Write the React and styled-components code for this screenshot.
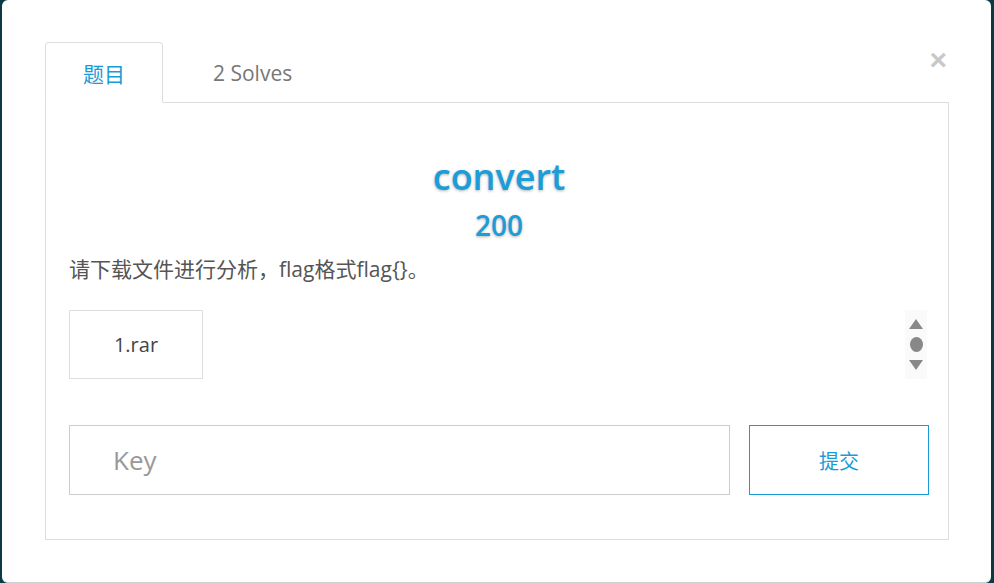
import React from 'react'
import styled, { createGlobalStyle } from 'styled-components'

const GlobalStyle = createGlobalStyle`
  html, body {
    margin: 0;
    padding: 0;
    background: #0c3a43;
    font-family: "Open Sans", "Noto Sans CJK SC", sans-serif;
  }
`

const App = () => {
    return (
        <>
            <GlobalStyle />
            <Modal>
                <TabRow>
                    <Tab active>题目</Tab>
                    <Tab>2 Solves</Tab>
                    <Close>×</Close>
                </TabRow>
                <Panel>
                    <Title>convert</Title>
                    <Score>200</Score>
                    <Desc>请下载文件进行分析，flag格式flag{'{}'}。</Desc>
                    <FileRow>
                        <FileBox>1.rar</FileBox>
                        <Scroller>
                            <Arrow up />
                            <Dot />
                            <Arrow />
                        </Scroller>
                    </FileRow>
                    <SubmitRow>
                        <KeyInput placeholder="Key" />
                        <SubmitButton>提交</SubmitButton>
                    </SubmitRow>
                </Panel>
            </Modal>
        </>
    )
}

export default App

const Modal = styled.div`
    box-sizing: border-box;
    margin-left: 2px;
    width: 989px;
    height: 583px;
    background: #fff;
    border-radius: 6px;
    border-bottom: 1px solid #d0d0d0;
    padding: 42px 42px 0 43px;
`
const TabRow = styled.div`
    display: flex;
    align-items: flex-end;
    height: 60px;
    border-bottom: 1px solid #ddd;
`
const Tab = styled.div`
    box-sizing: border-box;
    height: 61px;
    margin-bottom: -1px;
    margin-right: 12px;
    padding: 0 37px;
    display: flex;
    align-items: center;
    font-size: 21px;
    color: ${p => p.active ? '#1a9bd7' : '#777'};
    background: ${p => p.active ? '#fff' : 'transparent'};
    border: 1px solid ${p => p.active ? '#ddd' : 'transparent'};
    border-bottom-color: ${p => p.active ? '#fff' : 'transparent'};
    border-radius: 4px 4px 0 0;
`
const Close = styled.div`
    align-self: flex-start;
    margin: 0 2px 0 auto;
    font-family: "Liberation Sans", sans-serif;
    font-size: 30px;
    font-weight: 700;
    line-height: 36px;
    color: #c8c8c8;
`
const Panel = styled.div`
    box-sizing: border-box;
    height: 437px;
    border: 1px solid #ddd;
    border-top: none;
    padding: 54px 19px 0 23px;
`
const Title = styled.div`
    text-align: center;
    font-size: 36px;
    line-height: 40px;
    font-weight: 600;
    color: #1d9dd8;
    text-shadow: 0 1px 3px rgba(0, 0, 0, 0.3);
`
const Score = styled.div`
    margin-top: 13px;
    text-align: center;
    font-size: 28px;
    line-height: 31px;
    font-weight: 600;
    color: #1d9dd8;
    text-shadow: 0 1px 3px rgba(0, 0, 0, 0.3);
`
const Desc = styled.div`
    margin-top: 13px;
    font-size: 21px;
    line-height: 30px;
    color: #555;
`
const FileRow = styled.div`
    margin-top: 26px;
    display: flex;
    justify-content: space-between;
    align-items: stretch;
`
const FileBox = styled.div`
    box-sizing: border-box;
    width: 134px;
    height: 69px;
    border: 1px solid #ddd;
    display: flex;
    align-items: center;
    justify-content: center;
    font-size: 20px;
    color: #444;
`
const Scroller = styled.div`
    width: 22px;
    margin-right: 2px;
    background: #fafafa;
    display: flex;
    flex-direction: column;
    align-items: center;
    justify-content: center;
    gap: 8px;
`
const Arrow = styled.div`
    width: 0;
    height: 0;
    border-left: 7px solid transparent;
    border-right: 7px solid transparent;
    ${p => p.up ? 'border-bottom: 10px solid #888;' : 'border-top: 10px solid #888;'}
`
const Dot = styled.div`
    width: 13px;
    height: 15px;
    border-radius: 50%;
    background: #888;
`
const SubmitRow = styled.div`
    margin-top: 46px;
    display: flex;
    gap: 19px;
`
const KeyInput = styled.input`
    box-sizing: border-box;
    width: 661px;
    height: 70px;
    border: 1px solid #ccc;
    padding: 0 0 0 43px;
    font-family: "Open Sans", sans-serif;
    font-size: 26px;
    color: #555;
    outline: none;
    &::placeholder {
        color: #999;
    }
`
const SubmitButton = styled.button`
    box-sizing: border-box;
    width: 180px;
    height: 70px;
    background: #fff;
    border: 1px solid #1a9bd7;
    font-family: "Noto Sans CJK SC", sans-serif;
    font-size: 20px;
    color: #1a9bd7;
`
